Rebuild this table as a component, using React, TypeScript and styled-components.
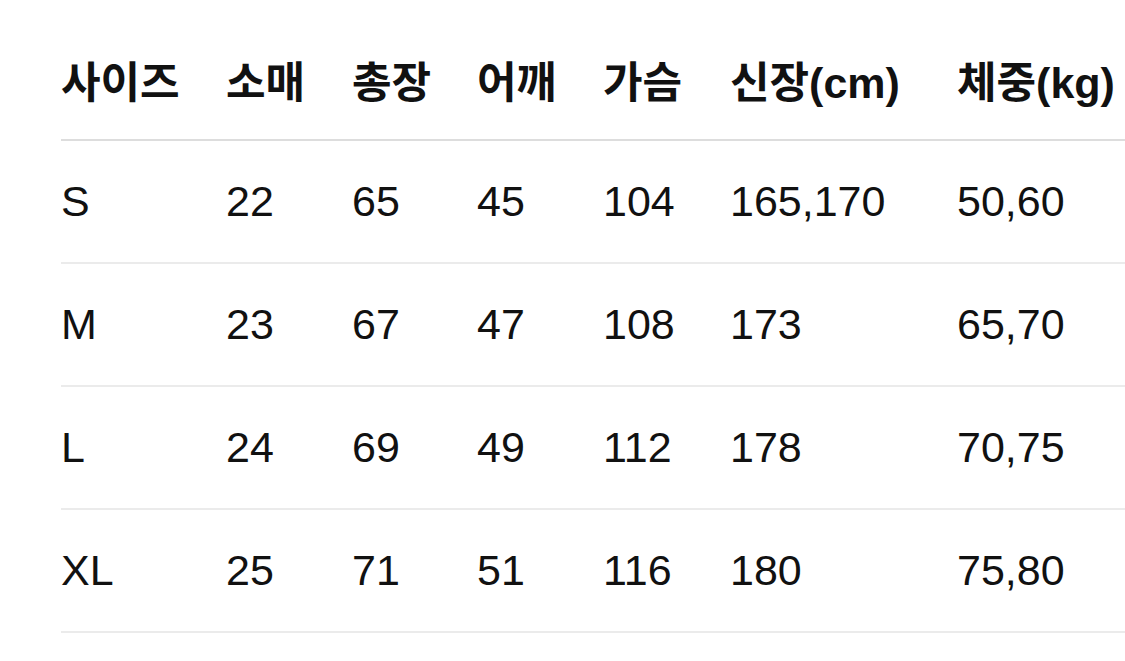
import * as React from 'react';
import styled, { createGlobalStyle } from 'styled-components';

const GlobalStyle = createGlobalStyle`
  html, body {
    margin: 0;
    padding: 0;
    background: #ffffff;
    overflow: hidden;
  }
  body {
    font-family: "Liberation Sans", "Noto Sans CJK KR", sans-serif;
    color: #111111;
  }
`;

const Page = styled.div`
  padding: 18px 0 0 61px;
`;

const Table = styled.table`
  width: 1064px;
  border-collapse: collapse;
  table-layout: fixed;
`;

const HeadCell = styled.th`
  height: 121px;
  padding: 0;
  text-align: left;
  vertical-align: middle;
  font-size: 43px;
  font-weight: 700;
  white-space: nowrap;
  border-bottom: 2px solid #dddddd;
`;

const Cell = styled.td`
  height: 121px;
  padding: 0;
  text-align: left;
  vertical-align: middle;
  font-size: 43px;
  font-weight: 400;
  white-space: nowrap;
  border-bottom: 2px solid #ebebeb;
`;

const columns = [
  { label: '사이즈', width: 165 },
  { label: '소매', width: 126 },
  { label: '총장', width: 125 },
  { label: '어깨', width: 126 },
  { label: '가슴', width: 127 },
  { label: '신장(cm)', width: 227 },
  { label: '체중(kg)', width: 168 },
];

const rows = [
  ['S', '22', '65', '45', '104', '165,170', '50,60'],
  ['M', '23', '67', '47', '108', '173', '65,70'],
  ['L', '24', '69', '49', '112', '178', '70,75'],
  ['XL', '25', '71', '51', '116', '180', '75,80'],
];

export default function App() {
  return (
    <Page>
      <GlobalStyle />
      <Table>
        <colgroup>
          {columns.map((c) => (
            <col key={c.label} style={{ width: c.width }} />
          ))}
        </colgroup>
        <thead>
          <tr>
            {columns.map((c) => (
              <HeadCell key={c.label}>{c.label}</HeadCell>
            ))}
          </tr>
        </thead>
        <tbody>
          {rows.map((r) => (
            <tr key={r[0]}>
              {r.map((v, i) => (
                <Cell key={i}>{v}</Cell>
              ))}
            </tr>
          ))}
        </tbody>
      </Table>
    </Page>
  );
}
